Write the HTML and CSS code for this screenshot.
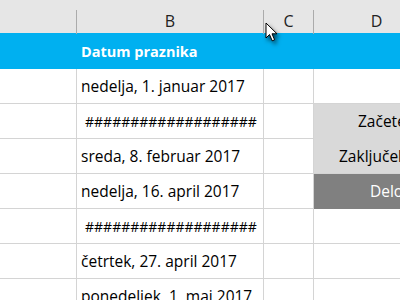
FILE: index.html
```html
<!DOCTYPE html>
<html lang="sl">
<head>
    <meta charset="UTF-8">
    <title>Prazniki</title>
    <link rel="stylesheet" href="styles.css">
</head>
<body>
    <div class="sheet">
        <div class="col-head">
            <div class="hcell"></div>
            <div class="hcell">B</div>
            <div class="hcell">C</div>
            <div class="hcell">D</div>
        </div>

        <div class="row title-row">
            <div class="cell"></div>
            <div class="cell title">Datum praznika</div>
            <div class="cell"></div>
            <div class="cell"></div>
        </div>

        <div class="row">
            <div class="cell"></div>
            <div class="cell">nedelja, 1. januar 2017</div>
            <div class="cell"></div>
            <div class="cell"></div>
        </div>
        <div class="row">
            <div class="cell"></div>
            <div class="cell hash">###################</div>
            <div class="cell"></div>
            <div class="cell info start">Začetek:</div>
        </div>
        <div class="row">
            <div class="cell"></div>
            <div class="cell">sreda, 8. februar 2017</div>
            <div class="cell"></div>
            <div class="cell info end">Zaključek:</div>
        </div>
        <div class="row">
            <div class="cell"></div>
            <div class="cell">nedelja, 16. april 2017</div>
            <div class="cell"></div>
            <div class="cell info dark">Delovni dnevi</div>
        </div>
        <div class="row">
            <div class="cell"></div>
            <div class="cell hash">###################</div>
            <div class="cell"></div>
            <div class="cell"></div>
        </div>
        <div class="row">
            <div class="cell"></div>
            <div class="cell">četrtek, 27. april 2017</div>
            <div class="cell"></div>
            <div class="cell"></div>
        </div>
        <div class="row">
            <div class="cell"></div>
            <div class="cell">ponedeljek, 1. maj 2017</div>
            <div class="cell"></div>
            <div class="cell"></div>
        </div>
    </div>

    <!-- mouse pointer over the C column edge -->
    <svg class="pointer" width="16" height="22" viewBox="0 0 16 22">
        <path d="M1 1 L1 16 L4.5 12.5 L7.2 18.8 L9.6 17.8 L7 11.8 L12 11.8 Z" fill="#fff" stroke="#000" stroke-width="1" stroke-linejoin="round"/>
    </svg>
</body>
</html>
```

FILE: styles.css
```css
body {
    margin: 0;
    padding: 0;
    background: #fff;
    font-family: 'Open Sans', 'Noto Sans', sans-serif;
    font-size: 15.5px;
    color: #000;
    overflow: hidden;
    width: 400px;
    height: 300px;
}

.sheet {
    width: 440px;
}

.col-head, .row {
    display: grid;
    grid-template-columns: 77px 187px 50px 126px;
}

.col-head {
    height: 33px;
    background: #e6e6e6;
}

.hcell {
    margin-top: 10px;
    border-right: 1px solid #ababab;
    display: flex;
    align-items: center;
    justify-content: center;
    font-size: 16px;
    color: #222;
    padding-bottom: 2px;
}

.row {
    height: 35px;
}

.cell {
    border-right: 1px solid #d4d4d4;
    border-bottom: 1px solid #d4d4d4;
    display: flex;
    align-items: center;
    padding-left: 4px;
    white-space: nowrap;
    overflow: hidden;
}

.title-row {
    height: 36px;
    background: #00b0f0;
}

.title-row .cell {
    border: none;
}

.title {
    color: #fff;
    font-weight: bold;
    font-size: 14.5px;
}

.hash {
    padding-left: 8px;
    font-size: 14px;
}

.info {
    background: #d9d9d9;
    border-right: none;
}

.info.start {
    padding-left: 44px;
    border-bottom-color: #d9d9d9;
}

.info.end {
    padding-left: 25px;
}

.info.dark {
    background: #808080;
    border-bottom-color: #808080;
    color: #fff;
    padding-left: 56px;
}

.pointer {
    position: absolute;
    left: 265px;
    top: 22px;
    filter: drop-shadow(2px 3px 2px rgba(0, 0, 0, 0.6));
}
```
